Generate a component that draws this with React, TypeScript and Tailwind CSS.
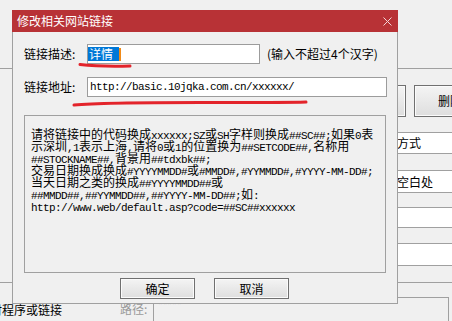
import React from "react"

const cjk = "font-['Noto_Sans_CJK_SC',sans-serif]"
const mono = "font-['Liberation_Mono',monospace] text-[11px] tracking-[-0.6px]"

const helpLines = [
  "请将链接中的代码换成xxxxxx;SZ或SH字样则换成##SC##;如果0表",
  "示深圳,1表示上海,请将0或1的位置换为##SETCODE##,名称用",
  "##STOCKNAME##,背景用##tdxbk##;",
  "交易日期换成换成#YYYYMMDD#或#MMDD#,#YYMMDD#,#YYYY-MM-DD#;",
  "当天日期之类的换成##YYYYMMDD##或",
  "##MMDD##,##YYMMDD##,##YYYY-MM-DD##;如:",
  "http://www.web/default.asp?code=##SC##xxxxxx",
]

// ascii runs in a half-width mono face, everything else in the CJK face
function MixedLine({ text }: { text: string }) {
  const parts = text.split(/([\x00-\x7F]+)/).filter(Boolean)
  return (
    <div className="h-[12px] leading-[12px] whitespace-nowrap">
      {parts.map((part, i) =>
        /^[\x00-\x7F]+$/.test(part) ? (
          <span key={i} className={mono}>
            {part}
          </span>
        ) : (
          <span key={i} className="text-[12px]">
            {part}
          </span>
        )
      )}
    </div>
  )
}

function WinButton({ label, className = "" }: { label: string; className?: string }) {
  return (
    <div
      className={`flex shrink-0 items-center justify-center border border-[#707070] bg-gradient-to-b from-[#f4f4f4] to-[#dedede] shadow-[inset_0_0_0_1px_#fbfbfb] text-[12px] text-black ${className}`}
    >
      {label}
    </div>
  )
}

function BackgroundWindow() {
  return (
    <div className="flex flex-col">
      <div className="h-[69px] border-b border-[#a0a0a0]" />

      <div className="flex h-[214px] border-b border-[#a0a0a0]">
        <div className="flex-1" />
        <div className="flex w-[122px] flex-col">
          <div className="mt-[16px] flex h-[32px]">
            <WinButton label="修改" className="ml-[10px] h-[32px] w-[66px]" />
            <WinButton label="删除" className="ml-[8px] h-[32px] w-[72px]" />
          </div>
          <div className="mt-[15px] flex h-[22px] items-center border-y border-[#a0a0a0] bg-white pl-[43px] text-[12px]">
            打开方式
          </div>
          <div className="mt-[16px] flex h-[23px] items-center border-y border-[#a0a0a0] bg-white pl-[43px] text-[12px]">
            双击空白处
          </div>
          <div className="mt-[14px] h-[21px] border-y border-[#a0a0a0] bg-white" />
          <div className="mt-[15px] h-[23px] border-y border-[#a0a0a0] bg-white" />
        </div>
      </div>

      <div className="flex h-[38px]">
        <div className="w-[120px] overflow-hidden pt-[18px]">
          <div className="ml-[-10px] whitespace-nowrap text-[12px] leading-[17px]">时程序或链接</div>
        </div>
        <div className="w-[33px] pt-[17px] text-[12px] leading-[17px] text-[#9a9a9a]">路径:</div>
        <div className="mr-[3px] mt-[14px] flex-1 border-x border-t border-[#a0a0a0] pl-[4px] pt-[2px] text-[10px] leading-[10px] text-[#8a8a8a]">
          *****
        </div>
      </div>
    </div>
  )
}

function LinkDialog() {
  return (
    <div className="absolute left-[12px] top-[10px] w-[386px]">
      <div className="flex h-[22px] items-center justify-between bg-[#b83236] pl-[5px] pr-[6px] text-[12px] text-white">
        <span>修改相关网站链接</span>
        <svg width="9" height="9" viewBox="0 0 9 9">
          <path d="M0.5 0.5 L8.5 8.5 M8.5 0.5 L0.5 8.5" stroke="#f3d6d6" strokeWidth="1" />
        </svg>
      </div>

      <div className="flex h-[272px] flex-col border-x border-b border-[#a0a0a0] bg-[#f0f0f0]">
        <div className="mt-[12px] flex h-[20px] items-center pl-[11px]">
          <span className="w-[63px] text-[12px]">链接描述:</span>
          <div className="flex h-[20px] w-[173px] items-start border border-[#9c9c9c] bg-white pt-[2px]">
            <span className="h-[14px] w-[31px] bg-[#0078d7] pl-[1px] text-[12px] leading-[14px] text-white">详情</span>
            <span className="mt-[1px] h-[13px] w-[2px] bg-[#f08a18]" />
          </div>
          <span className="ml-[7px] text-[12px]">(输入不超过4个汉字)</span>
        </div>

        <div className="mt-[13px] flex h-[20px] items-center pl-[11px]">
          <span className="w-[63px] text-[12px]">链接地址:</span>
          <div className="flex h-[20px] w-[300px] items-center border border-[#9c9c9c] bg-white pl-[2px]">
            <span className={`${mono} text-black`}>http://basic.10jqka.com.cn/xxxxxx/</span>
          </div>
        </div>

        <div className="ml-[11px] mt-[18px] h-[158px] w-[362px] border border-[#a0a0a0] pl-[6px] pt-[10px] text-black">
          {helpLines.map((line) => (
            <MixedLine key={line} text={line} />
          ))}
        </div>

        <div className="mt-[5px] flex gap-[19px] pl-[107px]">
          <WinButton label="确定" className="h-[21px] w-[75px]" />
          <WinButton label="取消" className="h-[21px] w-[75px]" />
        </div>
      </div>
    </div>
  )
}

export default function App() {
  return (
    <div className={`relative h-[321px] w-[452px] overflow-hidden bg-[#f0f0f0] text-black ${cjk}`}>
      <BackgroundWindow />
      <LinkDialog />
      {/* hand drawn red marks over the screenshot */}
      <svg className="pointer-events-none absolute left-0 top-0" width="452" height="321" viewBox="0 0 452 321">
        <path d="M80 64.5 Q100 66.8 130 66" stroke="#e3242b" strokeWidth="3" fill="none" strokeLinecap="round" />
        <path d="M74 105 Q100 102.5 200 102.5 T306 102" stroke="#e3242b" strokeWidth="3" fill="none" strokeLinecap="round" />
      </svg>
    </div>
  )
}
